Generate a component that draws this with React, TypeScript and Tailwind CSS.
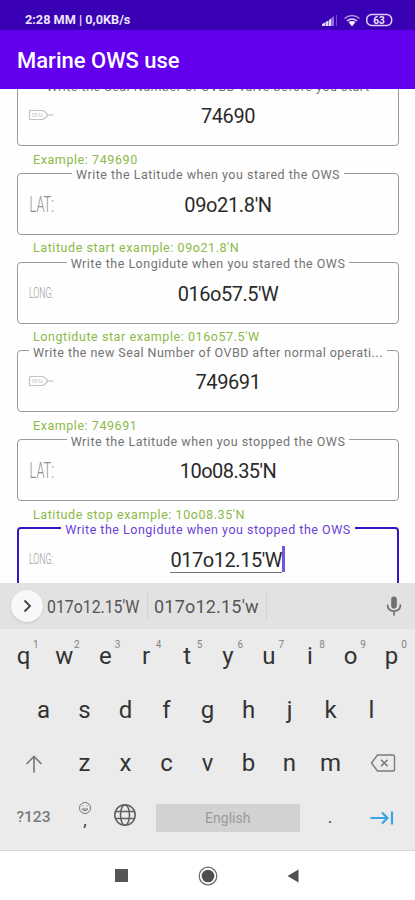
import React from "react";

type IconKind = "seal" | "lat" | "long";

interface FieldData {
  label: string;
  labelClass: string;
  icon: IconKind;
  value: string;
  valueClass: string;
  helper: string;
  helperClass: string;
  focused?: boolean;
}

const fields: FieldData[] = [
  {
    label: "Write the Seal Number of OVBD valve before you start",
    labelClass: "tracking-[0.5px]",
    icon: "seal",
    value: "74690",
    valueClass: "tracking-[-0.4px]",
    helper: "Example: 749690",
    helperClass: "tracking-[0.58px]",
  },
  {
    label: "Write the Latitude when you stared the OWS",
    labelClass: "tracking-[0.5px]",
    icon: "lat",
    value: "09o21.8'N",
    valueClass: "tracking-[-0.35px]",
    helper: "Latitude start example: 09o21.8'N",
    helperClass: "tracking-[0.57px]",
  },
  {
    label: "Write the Longidute when you stared the OWS",
    labelClass: "tracking-[0.5px]",
    icon: "long",
    value: "016o57.5'W",
    valueClass: "tracking-[-0.5px]",
    helper: "Longtidute star example: 016o57.5'W",
    helperClass: "tracking-[0.57px]",
  },
  {
    label: "Write the new Seal Number of OVBD after normal operati...",
    labelClass: "tracking-[0.46px]",
    icon: "seal",
    value: "749691",
    valueClass: "tracking-[-0.4px]",
    helper: "Example: 749691",
    helperClass: "tracking-[0.55px]",
  },
  {
    label: "Write the Latitude when you stopped the OWS",
    labelClass: "tracking-[0.5px]",
    icon: "lat",
    value: "10o08.35'N",
    valueClass: "tracking-[-0.55px]",
    helper: "Latitude stop example: 10o08.35'N",
    helperClass: "tracking-[0.57px]",
  },
  {
    label: "Write the Longidute when you stopped the OWS",
    labelClass: "tracking-[0.5px]",
    icon: "long",
    value: "017o12.15'W",
    valueClass: "tracking-[-0.45px]",
    helper: "",
    helperClass: "",
    focused: true,
  },
];

function FieldIcon({ kind }: { kind: IconKind }) {
  return (
    <svg width="30" height="30" viewBox="0 0 30 30" className="shrink-0 overflow-visible font-['Roboto']">
      {kind === "seal" && (
        <g fill="none" stroke="#c2c2c2" strokeWidth="1.200">
          <path d="M2.500 9.500h12.500l4 3v3l-4 3H2.500q-1 0-1-1v-7q0-1 1-1z" />
          <path d="M19 14h6.500" />
          <text x="3.500" y="16.100" fontSize="6" fill="#c8c8c8" stroke="none" textLength="12" lengthAdjust="spacingAndGlyphs">
            SEAL
          </text>
        </g>
      )}
      {kind === "lat" && (
        <text x="1.500" y="22" fontSize="22" fontWeight="300" fill="#8f8f8f" textLength="24.500" lengthAdjust="spacingAndGlyphs">
          LAT:
        </text>
      )}
      {kind === "long" && (
        <text x="1" y="19" fontSize="15.500" fontWeight="300" fill="#9a9a9a" textLength="24.500" lengthAdjust="spacingAndGlyphs">
          LONG:
        </text>
      )}
    </svg>
  );
}

function Field({ f }: { f: FieldData }) {
  return (
    <div className="h-[88.800px] shrink-0">
      <fieldset
        className={
          f.focused
            ? "h-[69.500px] rounded-[4px] border-2 border-[#3316c8]"
            : "h-[69.500px] rounded-[4px] border border-[#9a9a9a]"
        }
      >
        <legend
          className={`mx-auto h-4 whitespace-nowrap px-1 text-[12.500px] leading-[19px] ${f.labelClass} ${
            f.focused ? "text-[#6a3fd8]" : "text-[#737373]"
          }`}
        >
          {f.label}
        </legend>
        <div className={f.focused ? "flex h-[47px] items-center pl-[9px]" : "flex h-[47px] items-center pl-[10px]"}>
          <FieldIcon kind={f.icon} />
          <div className="flex flex-1 items-center justify-center pt-px text-[20px] leading-[23px] text-[#2a2a2a]">
            <span className={`${f.valueClass} ${f.focused ? "mt-[2px] border-b border-[#777777]" : ""}`}>{f.value}</span>
            {f.focused && <span className="-mt-[2px] h-[26px] w-[2.500px] bg-[#7656e0]" />}
          </div>
        </div>
      </fieldset>
      <div className={`pl-4 pt-[5.500px] text-[12.500px] leading-[15px] text-[#8cba47] ${f.helperClass}`}>{f.helper}</div>
    </div>
  );
}

function StatusBar() {
  return (
    <div className="flex h-[30px] shrink-0 items-center bg-[#3a00b3] pl-[25px] pt-[9px] text-[#ece4ff]">
      <span className="text-[12.700px] font-bold leading-[14px]">2:28 MM | 0,0KB/s</span>
      <svg width="72" height="16" viewBox="0 0 72 16" className="ml-auto mr-[22px]">
        <g fill="#e3d8ff">
          <path d="M1 14V12l3-1.500V14zM4.500 14v-4l3-1.500V14zM8 14V8l2.500-2v8z" />
          <path d="M11 14V5.500l2-1.500v10z" opacity=".5" />
          <path d="M15 14V3h1v11z" opacity=".35" />
        </g>
        <g fill="none" stroke="#e3d8ff" strokeWidth="1.600">
          <path d="M23.500 6.500q7.500-6 15 0" opacity=".65" />
          <path d="M26 9q5-4 10 0" />
        </g>
        <path d="M27.500 10q3.500-2 7 0L31 14.500z" fill="#f4efff" />
        <rect x="45.700" y="2.500" width="25" height="11" rx="5" fill="none" stroke="#ddd0ff" strokeWidth="1.500" />
        <text x="58" y="11.700" fontSize="10" fontWeight="700" fill="#ece4ff" textAnchor="middle">
          63
        </text>
      </svg>
    </div>
  );
}

const row1 = ["q", "w", "e", "r", "t", "y", "u", "i", "o", "p"];
const row2 = ["a", "s", "d", "f", "g", "h", "j", "k", "l"];
const row3 = ["z", "x", "c", "v", "b", "n", "m"];

function Keyboard() {
  return (
    <div className="flex h-[221px] shrink-0 flex-col bg-[#ebebeb] text-[24px] leading-[28px] text-[#333333]">
      <div className="flex h-[54px] px-[3px] pt-[13px]">
        {row1.map((k, i) => (
          <div key={k} className="relative flex-1 text-center">
            {k}
            <span className="absolute left-[30px] -top-[3px] text-[10px] leading-[12px] text-[#858585]">{(i + 1) % 10}</span>
          </div>
        ))}
      </div>
      <div className="flex h-[54px] px-[23px] pt-[13px]">
        {row2.map((k) => (
          <div key={k} className="flex-1 text-center">
            {k}
          </div>
        ))}
      </div>
      <div className="flex h-[54px] px-[3px] pt-[12px]">
        <div className="flex w-[61px] justify-center pt-[5px]">
          <svg width="20" height="20" viewBox="0 0 20 20" fill="none" stroke="#7c7c7c" strokeWidth="1.700">
            <path d="M10 18.500V2.500M2.500 10L10 2.500 17.500 10" />
          </svg>
        </div>
        {row3.map((k) => (
          <div key={k} className="flex-1 text-center">
            {k}
          </div>
        ))}
        <div className="flex w-[61px] justify-center pl-[2px] pt-[4px]">
          <svg width="26" height="20" viewBox="0 0 26 20" fill="none" stroke="#7a7a7a" strokeWidth="1.400">
            <path d="M7.500 2H23q1.500 0 1.500 1.500v13q0 1.500-1.500 1.500H7.500L1.500 10z" />
            <path d="M11 6.700l6.600 6.600M17.600 6.700l-6.600 6.600" strokeWidth="1.600" />
          </svg>
        </div>
      </div>
      <div className="flex h-[54px] items-center pb-[3px]">
        <div className="w-[67px] text-center text-[15.500px] font-medium leading-5 text-[#7a7a7a]">?123</div>
        <div className="-mt-[5px] flex w-[36px] flex-col items-center">
          <svg width="14" height="14" viewBox="0 0 14 14" fill="none" stroke="#777777" strokeWidth="1">
            <circle cx="7" cy="7" r="5.500" />
            <path d="M4 8q3 3.500 6 0zM4.500 5h1M8.500 5h1" />
          </svg>
          <span className="h-[12px] text-[17px] leading-[10px]">,</span>
        </div>
        <div className="-mt-[3px] flex w-[44px] justify-center">
          <svg width="24" height="24" viewBox="0 0 24 24" fill="none" stroke="#626262" strokeWidth="1.600">
            <circle cx="12" cy="12" r="10.200" />
            <ellipse cx="12" cy="12" rx="4.500" ry="10.200" />
            <path d="M3 8.500h18M3 15.500h18" />
          </svg>
        </div>
        <div className="ml-[8.500px] mt-[2px] flex h-[28px] w-[144.500px] items-center justify-center bg-[#d2d2d2] text-[14px] leading-5 text-[#9a9a9a]">
          English
        </div>
        <div className="w-[60px] text-center text-[18px] leading-[24px] text-[#555555]">.</div>
        <svg width="24" height="16" viewBox="0 0 24 16" fill="none" stroke="#38a5e4" strokeWidth="2.200" className="ml-[10px] mt-[2px]">
          <path d="M0.500 8H17M12 2.500L17.500 8l-5.500 5.500M22 1.500v13" />
        </svg>
      </div>
    </div>
  );
}

export default function App() {
  return (
    <div className="flex h-[900px] w-[415px] flex-col overflow-hidden bg-white font-['Roboto',sans-serif]">
      <StatusBar />
      <div className="flex h-[58.500px] shrink-0 items-center bg-[#6200ee] pl-[17px] pt-[3px] text-[22px] font-medium leading-[26px] text-white">
        Marine OWS use
      </div>
      <div className="flex h-[494.500px] shrink-0 flex-col overflow-hidden bg-[#fefefe] pl-[17px] pr-[16px]">
        <div className="-mt-[12px] flex flex-col">
          {fields.map((f) => (
            <Field key={f.label} f={f} />
          ))}
        </div>
      </div>
      <div className="flex h-[46px] shrink-0 items-center bg-[#e2e2e2] pl-[11px] text-[18px] leading-6 text-[#555555]">
        <div className="flex size-8 shrink-0 items-center justify-center rounded-full bg-[#f8f8f8] shadow-sm">
          <svg width="16" height="16" viewBox="0 0 16 16" fill="none" stroke="#444444" strokeWidth="1.900">
            <path d="M5.500 2.500L11 8l-5.500 5.500" />
          </svg>
        </div>
        <span className="ml-[4px] w-[100px] origin-left scale-x-[0.880] pt-[2px]">017o12.15'W</span>
        <span className="h-7 w-px bg-[#d2d2d2]" />
        <span className="ml-[6px] w-[112px] pt-[2px] tracking-[0.200px]">017o12.15'w</span>
        <span className="h-7 w-px bg-[#d2d2d2]" />
        <svg width="16" height="22" viewBox="0 0 16 22" className="ml-[119px]" fill="none" stroke="#707070" strokeWidth="1.700">
          <rect x="5.200" y="1.500" width="5.600" height="12" rx="2.800" fill="#707070" stroke="none" />
          <path d="M1.500 9.500Q1.500 16 8 16t6.500-6.500M8 16v4.500" />
        </svg>
      </div>
      <Keyboard />
      <div className="flex h-[50px] shrink-0 items-center border-t border-[#d8d8d8] bg-white pl-[115px]">
        <div className="size-[12.500px] bg-[#555555]" />
        <svg width="20" height="20" viewBox="0 0 20 20" className="ml-[70px]">
          <circle cx="10" cy="10" r="8.800" fill="none" stroke="#666666" strokeWidth="1.200" />
          <circle cx="10" cy="10" r="6.300" fill="#4f4f4f" />
        </svg>
        <svg width="12" height="14" viewBox="0 0 12 14" className="ml-[69px]">
          <path d="M11.500 0.500v13L0.500 7z" fill="#505050" />
        </svg>
      </div>
    </div>
  );
}
